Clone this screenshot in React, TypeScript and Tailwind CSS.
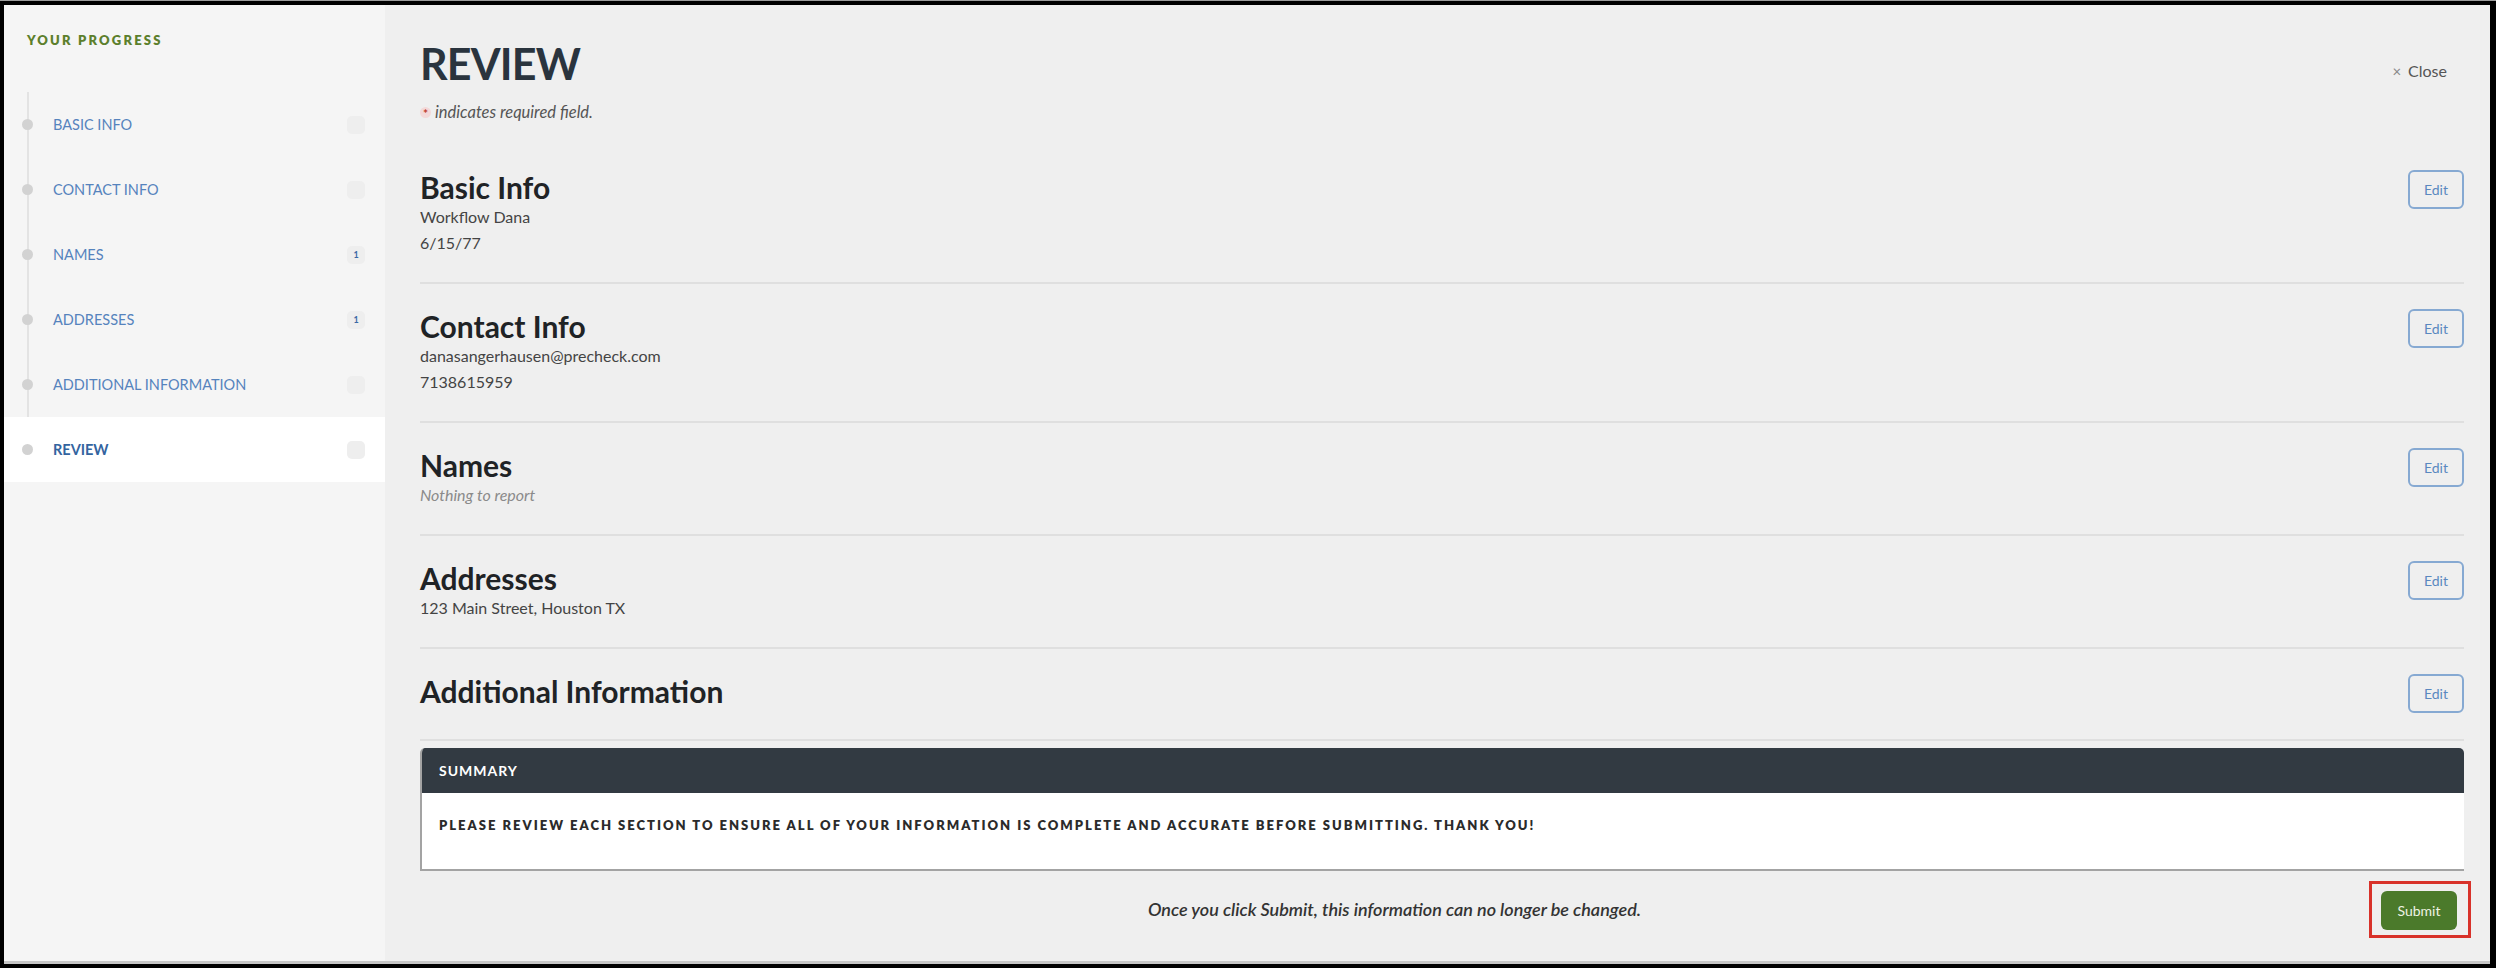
import React from 'react'

type Step = { label: string; count?: number; active?: boolean }

const steps: Step[] = [
  { label: 'Basic Info' },
  { label: 'Contact Info' },
  { label: 'Names', count: 1 },
  { label: 'Addresses', count: 1 },
  { label: 'Additional Information' },
  { label: 'Review', active: true },
]

type Section = { title: string; lines?: string[]; empty?: boolean }

const sections: Section[] = [
  { title: 'Basic Info', lines: ['Workflow Dana', '6/15/77'] },
  { title: 'Contact Info', lines: ['danasangerhausen@precheck.com', '7138615959'] },
  { title: 'Names', empty: true },
  { title: 'Addresses', lines: ['123 Main Street, Houston TX'] },
  { title: 'Additional Information' },
]

function ProgressNav() {
  return (
    <aside className="w-[381px] shrink-0 bg-[#f5f5f5] pt-[27px]">
      <h2 className="pl-[23px] text-[13px] leading-4 font-extrabold tracking-[2.2px] text-[#5c7f2c] uppercase">
        Your Progress
      </h2>
      <ul className="relative mt-[44px]">
        <span className="absolute left-[23px] top-0 bottom-0 w-[2px] bg-[#e3e3e3]" />
        {steps.map((s) => (
          <li
            key={s.label}
            className={`relative flex items-center h-[65px] pr-[20px] ${s.active ? 'bg-white' : ''}`}
          >
            <span className="absolute left-[18px] w-[11px] h-[11px] rounded-full bg-[#d2d2d2]" />
            <span
              className={`pl-[49px] flex-1 text-[14.5px] uppercase ${
                s.active ? 'font-bold text-[#33649f]' : 'text-[#5583bd]'
              }`}
            >
              {s.label}
            </span>
            <span className="w-[18px] h-[18px] rounded-[5px] bg-[#eeeeee] flex items-center justify-center text-[9px] font-bold text-[#3b69a5]">
              {s.count ?? ''}
            </span>
          </li>
        ))}
      </ul>
    </aside>
  )
}

function ReviewSection({ title, lines, empty }: Section) {
  return (
    <section className="flex items-start justify-between pt-[25px] pb-[26px] border-b-2 border-[#dfdfdf]">
      <div>
        <h3 className="text-[30px] leading-[34px] font-bold text-[#1f2326]">{title}</h3>
        {empty && <p className="text-[16px] leading-[26px] italic text-[#8a8a8a]">Nothing to report</p>}
        {lines?.map((l) => (
          <p key={l} className="text-[16px] leading-[26px] text-[#444]">
            {l}
          </p>
        ))}
      </div>
      <button className="w-[56px] h-[39px] rounded-[6px] border-2 border-[#86a9d2] text-[14px] text-[#5a88c0]">
        Edit
      </button>
    </section>
  )
}

export default function App() {
  return (
    <div
      className="w-[2496px] h-[968px] overflow-hidden bg-black border-t border-[#9c9c9c] pt-[4px] pl-[4px] pr-[6px] pb-[4px]"
      style={{ fontFamily: 'Lato, "Open Sans", sans-serif' }}
    >
      <div className="flex h-full border-b-[3px] border-[#c6c6c6]">
        <ProgressNav />
        <main className="flex-1 bg-[#efefef] pl-[35px] pr-[26px] pt-[35px]">
          <div className="flex items-start justify-between">
            <h1 className="text-[43px] leading-[48px] font-bold text-[#2a343e] tracking-[-0.8px]">REVIEW</h1>
            <button className="mt-[19px] mr-[17px] flex items-center gap-[7px] text-[16px] text-[#555]">
              <span className="text-[#888] text-[15px]">×</span>
              Close
            </button>
          </div>
          <p className="mt-[14px] flex items-center text-[16.5px] leading-5 italic text-[#555]">
            <span className="mr-[4px] w-[11px] h-[11px] rounded-full bg-[#f3d9d9] text-[#c0392b] text-[12px] leading-[13px] not-italic font-bold flex justify-center">
              *
            </span>
            indicates required field.
          </p>

          <div className="mt-[23px]">
            {sections.map((s) => (
              <ReviewSection key={s.title} {...s} />
            ))}
          </div>

          <div className="mt-[7px] rounded-t-[5px] border-l-2 border-b-2 border-[#a3a3a3] overflow-hidden">
            <div className="h-[45px] bg-[#323a42] px-[17px] flex items-center text-[14px] font-bold tracking-[1px] text-white uppercase">
              Summary
            </div>
            <div className="h-[76px] bg-white px-[17px] pt-[23px] text-[13px] leading-[18px] font-extrabold tracking-[2px] text-[#2b2b2b] uppercase">
              Please review each section to ensure all of your information is complete and accurate before submitting. Thank you!
            </div>
          </div>

          <div className="mt-[10px] flex items-center">
            <p className="flex-1 text-center text-[18px] italic font-semibold text-[#333]">
              Once you click Submit, this information can no longer be changed.
            </p>
            <div className="mr-[-7px] border-[3px] border-[#d8322a] pl-[9px] pr-[11px] pt-[7px] pb-[5px]">
              <button className="w-[76px] h-[39px] rounded-[6px] bg-[#4b7a2b] text-[14px] text-[#eef3e4]">
                Submit
              </button>
            </div>
          </div>
        </main>
      </div>
    </div>
  )
}
